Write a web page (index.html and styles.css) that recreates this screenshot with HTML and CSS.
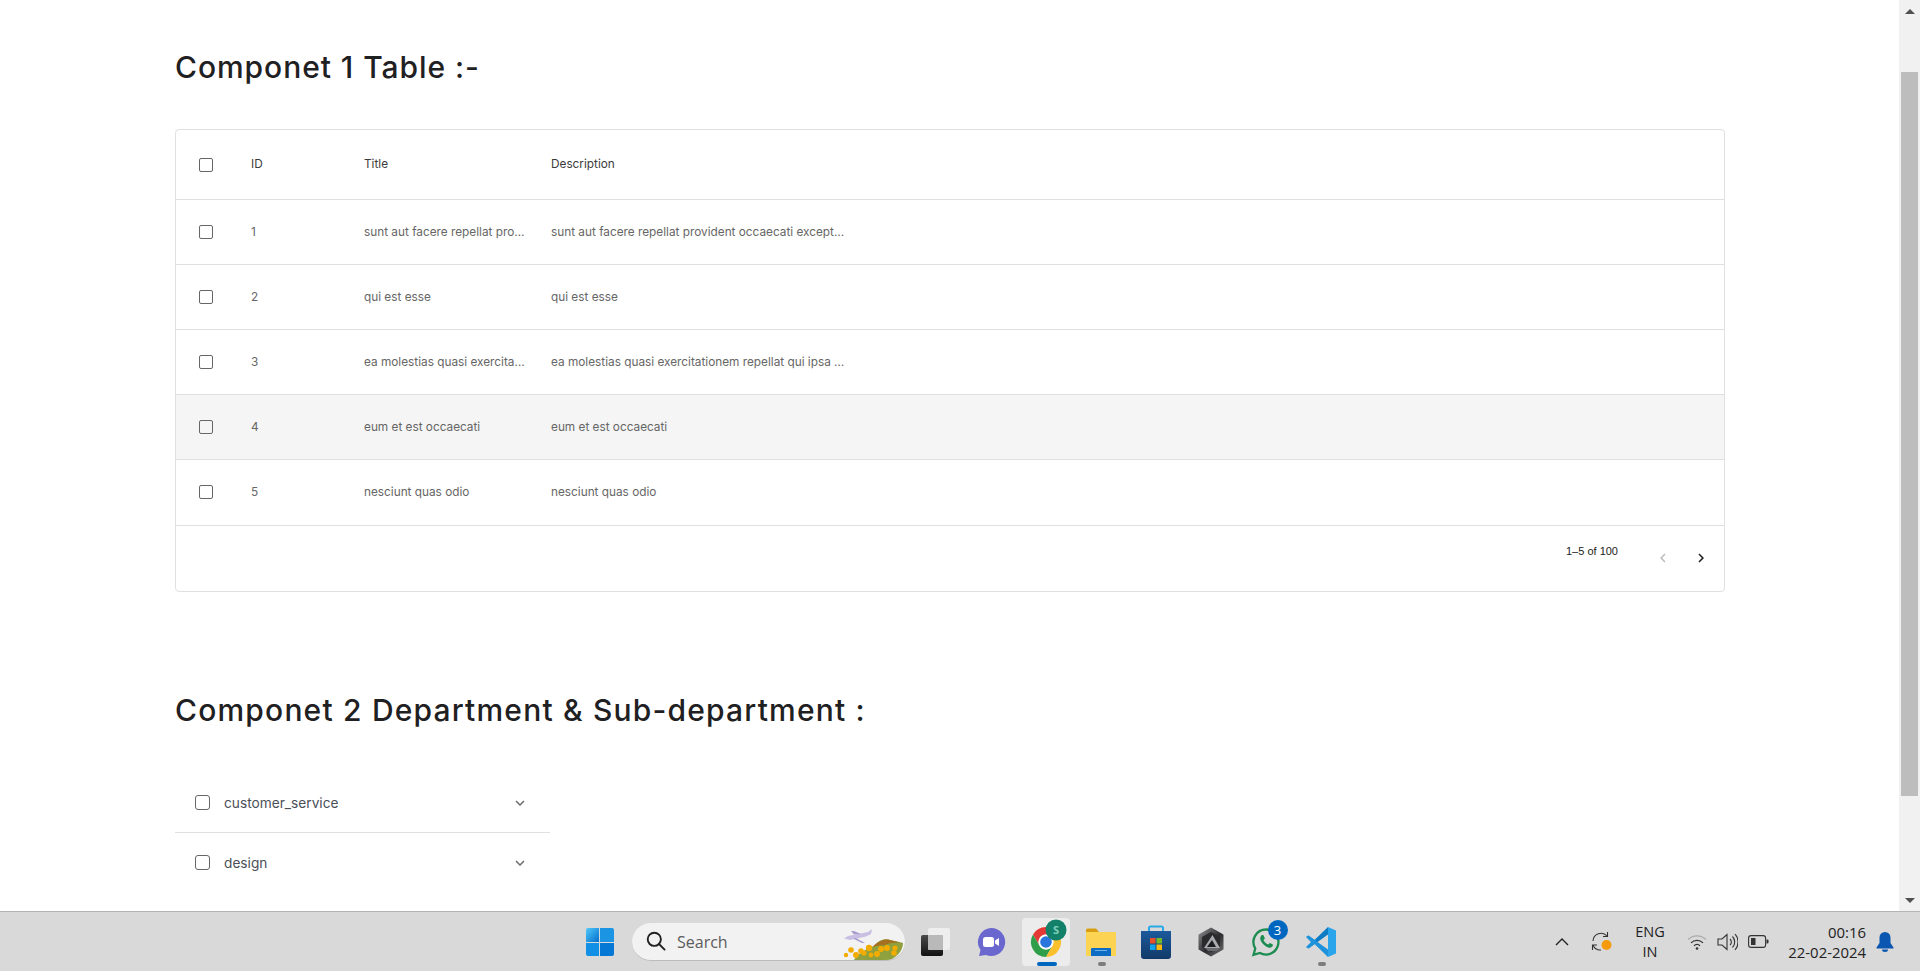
FILE: index.html
```html
<!DOCTYPE html>
<html lang="en">

<head>
    <meta charset="UTF-8">
    <meta name="viewport" content="width=device-width, initial-scale=1.0">
    <title>Components</title>
    <link rel="stylesheet" href="styles.css">
</head>

<body>
    <div class="screen">
        <main class="page">
            <h1 class="heading">Componet 1 Table :-</h1>

            <div class="card">
                <div class="row row-head">
                    <div class="cell-check"><span class="box"></span></div>
                    <div>ID</div>
                    <div>Title</div>
                    <div>Description</div>
                </div>
                <div class="row">
                    <div class="cell-check"><span class="box"></span></div>
                    <div>1</div>
                    <div>sunt aut facere repellat pro…</div>
                    <div>sunt aut facere repellat provident occaecati except…</div>
                </div>
                <div class="row">
                    <div class="cell-check"><span class="box"></span></div>
                    <div>2</div>
                    <div>qui est esse</div>
                    <div>qui est esse</div>
                </div>
                <div class="row">
                    <div class="cell-check"><span class="box"></span></div>
                    <div>3</div>
                    <div>ea molestias quasi exercita…</div>
                    <div>ea molestias quasi exercitationem repellat qui ipsa …</div>
                </div>
                <div class="row row-hover">
                    <div class="cell-check"><span class="box"></span></div>
                    <div>4</div>
                    <div>eum et est occaecati</div>
                    <div>eum et est occaecati</div>
                </div>
                <div class="row row-last">
                    <div class="cell-check"><span class="box"></span></div>
                    <div>5</div>
                    <div>nesciunt quas odio</div>
                    <div>nesciunt quas odio</div>
                </div>
                <div class="pager">
                    <span class="pager-text">1–5 of 100</span>
                    <svg class="pager-btn" viewBox="0 0 24 24" fill="#bdbdbd"><path d="M15.41 7.41 14 6l-6 6 6 6 1.41-1.41L10.83 12z"/></svg>
                    <svg class="pager-btn" viewBox="0 0 24 24" fill="#222"><path d="M10 6 8.59 7.41 13.17 12l-4.58 4.59L10 18l6-6z"/></svg>
                </div>
            </div>

            <h1 class="heading heading-second">Componet 2 Department &amp; Sub-department :</h1>

            <div class="accordion">
                <div class="acc-row acc-line">
                    <span class="box box-acc"></span>
                    <span class="acc-label">customer_service</span>
                    <svg class="acc-arrow" viewBox="0 0 24 24" fill="#6b6b6b"><path d="M16.59 8.59 12 13.17 7.41 8.59 6 10l6 6 6-6z"/></svg>
                </div>
                <div class="acc-row">
                    <span class="box box-acc"></span>
                    <span class="acc-label">design</span>
                    <svg class="acc-arrow" viewBox="0 0 24 24" fill="#6b6b6b"><path d="M16.59 8.59 12 13.17 7.41 8.59 6 10l6 6 6-6z"/></svg>
                </div>
            </div>
        </main>

        <div class="scrollbar">
            <span class="sb-up"></span>
            <span class="sb-thumb"></span>
            <span class="sb-down"></span>
        </div>
    </div>

    <footer class="taskbar">
        <div class="strip">
            <div class="tb-item">
                <svg width="30" height="30" viewBox="0 0 30 30">
                    <defs>
                        <linearGradient id="win" x1="0" y1="0" x2="1" y2="1">
                            <stop offset="0" stop-color="#52c8f8"/>
                            <stop offset="1" stop-color="#0170cf"/>
                        </linearGradient>
                    </defs>
                    <path d="M1 3a2 2 0 0 1 2-2h11v14H1z" fill="url(#win)"/>
                    <path d="M15 1h12a2 2 0 0 1 2 2v12H15z" fill="#1c94e4"/>
                    <path d="M1 16h13v13H3a2 2 0 0 1-2-2z" fill="#1190e6"/>
                    <path d="M15 16h14v11a2 2 0 0 1-2 2H15z" fill="#0478d4"/>
                </svg>
            </div>

            <div class="search">
                <svg width="20" height="20" viewBox="0 0 20 20" fill="none" stroke="#222" stroke-width="1.9">
                    <circle cx="8.3" cy="8.3" r="6.6"/>
                    <path d="m13 13 5.6 5.6" stroke-linecap="round"/>
                </svg>
                <span class="search-text">Search</span>
                <svg class="search-art" width="65" height="38" viewBox="0 0 65 38">
                    <path d="M4 16.500 8 14l20-4 4-3-1 5-5 2.500-16 3.500z" fill="#c9bfe2"/>
                    <path d="M14 12.500 11 9h3l7 3zM16 16l9 5h-3l-9-4.500z" fill="#a99dd0"/>
                    <path d="M14 38c4-6 10-10 20-14 4-5 10-8 16-6 4 1 9 2 13 3 0 7-5 13-13 17z" fill="#8fa03e"/>
                    <path d="M32 25c5-4 11-9 18-7 4 1 9 2 13 3-8-1-14 0-18 2-5 0-9 1-13 2z" fill="#a5701f"/>
                    <g fill="#f2ac00">
                        <circle cx="6" cy="33" r="2.200"/>
                        <circle cx="11" cy="28" r="2.800"/>
                        <circle cx="16" cy="33" r="3"/>
                        <circle cx="21" cy="29" r="2.800"/>
                        <circle cx="24" cy="31" r="2.600"/>
                        <circle cx="29" cy="26" r="3.200"/>
                        <circle cx="31" cy="33" r="2.400"/>
                        <circle cx="37" cy="32" r="3"/>
                        <circle cx="41" cy="27" r="3"/>
                        <circle cx="47" cy="26" r="3"/>
                        <circle cx="54" cy="31" r="2.800"/>
                        <circle cx="55" cy="26" r="2.600"/>
                    </g>
                </svg>
            </div>

            <div class="tb-item">
                <svg width="32" height="30" viewBox="0 0 32 30">
                    <defs>
                        <linearGradient id="tv" x1="0" y1="0" x2="0" y2="1">
                            <stop offset="0" stop-color="#4a4a4a"/>
                            <stop offset="1" stop-color="#111"/>
                        </linearGradient>
                    </defs>
                    <rect x="1" y="8" width="22" height="21" rx="2" fill="url(#tv)"/>
                    <rect x="8" y="1" width="22" height="22" rx="2" fill="#f3f3f3" fill-opacity=".8"/>
                    <rect x="8" y="8" width="15" height="15" rx="1" fill="#b9b9b9"/>
                </svg>
            </div>

            <div class="tb-item">
                <svg width="30" height="30" viewBox="0 0 30 30">
                    <path d="M15 1a14 14 0 1 1-5 27l-7 1 1.500-6A14 14 0 0 1 15 1z" fill="#6a67cf"/>
                    <rect x="7" y="10" width="11" height="10" rx="2.500" fill="#fff"/>
                    <path d="M19 13.500l4-2.500v8l-4-2.500z" fill="#fff"/>
                </svg>
            </div>

            <div class="tb-item tb-active">
                <svg width="48" height="48" viewBox="0 0 48 48">
                    <path d="M37 16.500A15 15 0 0 0 11 16.500L17.500 27.750A7.500 7.500 0 0 1 24 16.500z" fill="#e53935"/>
                    <path d="M11 16.500A15 15 0 0 0 24 39L30.500 27.750A7.500 7.500 0 0 1 17.500 27.750z" fill="#2e9e48"/>
                    <path d="M24 39A15 15 0 0 0 37 16.500H24A7.500 7.500 0 0 1 30.500 27.750z" fill="#fbc02d"/>
                    <circle cx="24" cy="24" r="7.500" fill="#fff"/>
                    <circle cx="24" cy="24" r="5.800" fill="#2a76dd"/>
                    <circle cx="34" cy="12" r="10.500" fill="#13806a"/>
                    <text x="34" y="16" class="badge-s">S</text>
                </svg>
                <span class="tb-bar"></span>
            </div>

            <div class="tb-item tb-open">
                <svg width="30" height="30" viewBox="0 0 30 30">
                    <path d="M0 3a1.500 1.500 0 0 1 1.500-1.500H10l3 3.500h-13z" fill="#d89e12"/>
                    <path d="M0 5h29a1 1 0 0 1 1 1v22a1 1 0 0 1-1 1H1a1 1 0 0 1-1-1z" fill="#fcd353"/>
                    <path d="M5 22a1 1 0 0 1 1-1h18a1 1 0 0 1 1 1v7H5z" fill="#0f6cc4"/>
                    <rect x="9" y="23" width="12" height="1" fill="#6db4ee"/>
                </svg>
                <span class="tb-dot"></span>
            </div>

            <div class="tb-item">
                <svg width="30" height="34" viewBox="0 0 30 34">
                    <defs>
                        <linearGradient id="store" x1="0" y1="0" x2="0" y2="1">
                            <stop offset="0" stop-color="#1c5a9c"/>
                            <stop offset="1" stop-color="#123a68"/>
                        </linearGradient>
                    </defs>
                    <path d="M8 7V3a1.500 1.500 0 0 1 1.500-1.500h11A1.500 1.500 0 0 1 22 3v4" fill="none" stroke="#2aa9e8" stroke-width="2"/>
                    <path d="M0 6h30v25a3 3 0 0 1-3 3H3a3 3 0 0 1-3-3z" fill="url(#store)"/>
                    <rect x="9" y="13" width="5.500" height="5.500" fill="#e8502c"/>
                    <rect x="15.500" y="13" width="5.500" height="5.500" fill="#74b92a"/>
                    <rect x="9" y="19.500" width="5.500" height="5.500" fill="#12a3ea"/>
                    <rect x="15.500" y="19.500" width="5.500" height="5.500" fill="#fcb90f"/>
                </svg>
            </div>

            <div class="tb-item">
                <svg width="28" height="30" viewBox="0 0 28 30">
                    <defs>
                        <linearGradient id="hexa" x1="0" y1="0" x2="1" y2="1">
                            <stop offset="0" stop-color="#8c8d90"/>
                            <stop offset=".55" stop-color="#2c2c2e"/>
                            <stop offset="1" stop-color="#6e6e70"/>
                        </linearGradient>
                    </defs>
                    <path d="M14 1.500 25.500 8v14L14 28.500 2.500 22V8z" fill="url(#hexa)" stroke="url(#hexa)" stroke-width="2" stroke-linejoin="round"/>
                    <path d="M14 5 23 10v10l-9 5-9-5V10z" fill="#2a2a2c"/>
                    <path d="M15.500 8 23 21H7z" fill="#a9aaad"/>
                    <path d="M15 13 19 20H10z" fill="#1d1d1f"/>
                    <path d="M8 21h15l-3 3H11z" fill="#6a6b6e"/>
                </svg>
            </div>

            <div class="tb-item tb-wa">
                <svg width="30" height="30" viewBox="0 0 30 30">
                    <path d="M15 2.500a12.500 12.500 0 1 1-6 23.500l-6.500 1.800 1.800-6.300A12.500 12.500 0 0 1 15 2.500z" fill="none" stroke="#1c8c50" stroke-width="2.300"/>
                    <path d="M10.600 8.400c-1.300 1-1.800 2.700-1 4.800 1.300 3.200 4 6 7.500 7.200 2 .7 3.500 0 4.400-1.200.5-.7.500-1.600.3-1.800l-3-1.500-1.600 1.600c-2-.8-3.800-2.600-4.700-4.600l1.400-1.500-1.300-3c-.4-.4-1.700-.5-2.500 0z" fill="#1c8c50"/>
                </svg>
                <span class="tb-count">3</span>
            </div>

            <div class="tb-item tb-open">
                <svg width="32" height="30" viewBox="0 0 32 30">
                    <path d="M1 20l2.500 1.500L23 7.500V0L9.500 13 3.500 8.500 1 10z" fill="#0d7cc4"/>
                    <path d="M3.500 8.500 1 10v10l2.500 1.500L9 15z" fill="#d9d9d9"/>
                    <path d="M1 10l2.500-1.500L23 22.500V30L9.500 17 3.500 21.500 1 20l5-5z" fill="#1e93dc"/>
                    <path d="M23 0l8 3.500v23L23 30z" fill="#2aa5ec"/>
                </svg>
                <span class="tb-dot"></span>
            </div>
        </div>

        <div class="tray">
            <svg class="tray-chevron" width="14" height="8" viewBox="0 0 14 8" fill="none" stroke="#222" stroke-width="1.400"><path d="M1 7l6-6 6 6"/></svg>
            <svg class="tray-sync" width="22" height="22" viewBox="0 0 22 22" fill="none" stroke="#333" stroke-width="1.100">
                <path d="M2 10a8 8 0 0 1 14-5"/>
                <path d="M16.500 1v4.500H12"/>
                <path d="M2 14a8 8 0 0 0 8 5"/>
                <path d="M1.500 19v-5H6"/>
                <circle cx="15.500" cy="14" r="5" fill="#f59a0b" stroke="none"/>
            </svg>
            <div class="tray-lang">ENG<br>IN</div>
            <svg class="tray-wifi" width="20" height="16" viewBox="0 0 20 16" fill="none" stroke="#333" stroke-width="1.200">
                <path d="M1 5.500a13 13 0 0 1 18 0" stroke="#aaa"/>
                <path d="M4 8.800a8.500 8.500 0 0 1 12 0"/>
                <path d="M7 11.800a4 4 0 0 1 6 0"/>
                <circle cx="10" cy="14.500" r="1.300" fill="#333" stroke="none"/>
            </svg>
            <svg class="tray-vol" width="21" height="18" viewBox="0 0 21 18" fill="none" stroke="#333" stroke-width="1.100">
                <path d="M1 6h4l5-4.500v15L5 12H1z"/>
                <path d="M13 6a4 4 0 0 1 0 6"/>
                <path d="M15.500 3.500a8 8 0 0 1 0 11"/>
                <path d="M18 1a12 12 0 0 1 0 16"/>
            </svg>
            <svg class="tray-batt" width="21" height="13" viewBox="0 0 21 13" fill="none" stroke="#333" stroke-width="1.100">
                <rect x=".6" y=".6" width="17" height="11.800" rx="2.500"/>
                <rect x="3" y="3" width="4.500" height="7" fill="#333" stroke="none"/>
                <path d="M18.500 4.500h1a1 1 0 0 1 1 1v2a1 1 0 0 1-1 1h-1z" fill="#333" stroke="none"/>
            </svg>
            <div class="tray-clock">00:16<br>22-02-2024</div>
            <svg class="tray-bell" width="18" height="20" viewBox="0 0 18 20" fill="#0a56b0">
                <path d="M9 0a5.500 5.500 0 0 1 5.500 5.500V11l3 4.500v1H.5v-1l3-4.500V5.500A5.500 5.500 0 0 1 9 0z"/>
                <path d="M6 17.500h6a3 2.500 0 0 1-6 0z"/>
            </svg>
        </div>
    </footer>
</body>

</html>
```

FILE: styles.css
```css
* {
    box-sizing: border-box;
}

body {
    margin: 0;
    height: 971px;
    overflow: hidden;
    font-family: Inter, sans-serif;
    background-color: #fff;
    display: flex;
    flex-direction: column;
}

.screen {
    display: flex;
    height: 911px;
}

.page {
    flex: 1;
    padding: 45px 174px 0 175px;
    overflow: hidden;
}

.heading {
    margin: 0;
    font-size: 30px;
    line-height: 44px;
    font-weight: 500;
    letter-spacing: 0.95px;
    color: #1f2022;
}

.heading-second {
    margin-top: 96px;
    letter-spacing: 1.19px;
}

/* table */
.card {
    margin-top: 40px;
    border: 1px solid #e0e0e0;
    border-radius: 4px;
    height: 463px;
}

.row {
    display: grid;
    grid-template-columns: 75px 113px 187px 1fr;
    align-items: center;
    height: 65px;
    border-bottom: 1px solid #e0e0e0;
    font-size: 11.8px;
    color: #666;
    white-space: nowrap;
}

.row > div {
    padding-bottom: 1px;
}

.row > .cell-check {
    padding-bottom: 0;
}

.row-head {
    height: 70px;
    color: #3b3b3b;
}

.row-hover {
    background-color: #f5f5f5;
}

.row-last {
    height: 66px;
    padding-bottom: 1px;
}

.cell-check {
    padding-left: 23px;
    display: flex;
}

.box {
    display: block;
    width: 14px;
    height: 14px;
    border: 1.5px solid #666;
    border-radius: 2px;
}

.pager {
    display: flex;
    height: 65px;
    justify-content: flex-end;
    font-family: "Liberation Sans", sans-serif;
    font-size: 11px;
    color: #222;
}

.pager-text {
    margin: 19px 36px 0 0;
}

.pager-btn {
    width: 18px;
    height: 18px;
    margin: 23px 0 0 0;
}

.pager-btn:last-child {
    margin: 23px 14px 0 20px;
}

/* accordion */
.accordion {
    margin-top: 42px;
    width: 375px;
}

.acc-row {
    display: flex;
    align-items: center;
    height: 59px;
    padding: 0 20px;
}

.acc-line {
    padding-bottom: 1px;
    border-bottom: 1px solid #e0e0e0;
}

.box-acc {
    width: 15px;
    height: 15px;
    border-radius: 3px;
}

.acc-label {
    margin-left: 14px;
    font-size: 13.7px;
    color: #4a4f57;
}

.acc-arrow {
    width: 18px;
    height: 18px;
    margin-left: auto;
    margin-right: 1px;
}

/* scrollbar */
.scrollbar {
    width: 21px;
    background-color: #f1f1f1;
    display: flex;
    flex-direction: column;
    align-items: center;
}

.sb-up {
    margin-top: 9px;
    border-left: 5px solid transparent;
    border-right: 5px solid transparent;
    border-bottom: 5px solid #505050;
}

.sb-thumb {
    width: 17px;
    height: 724px;
    margin-top: 58px;
    background-color: #bdbdbd;
}

.sb-down {
    margin-top: 102px;
    border-left: 5px solid transparent;
    border-right: 5px solid transparent;
    border-top: 5px solid #505050;
}

/* taskbar */
.taskbar {
    height: 60px;
    background-color: #d9d9d9;
    border-top: 1px solid #b4b4b4;
    display: flex;
    font-family: "Open Sans", sans-serif;
    color: #222;
}

.strip {
    display: flex;
    align-items: center;
    padding-left: 572px;
}

.tb-item {
    position: relative;
    width: 55px;
    height: 59px;
    display: flex;
    align-items: center;
    justify-content: center;
}

.tb-active svg {
    border-radius: 4px;
    background-color: #ececec;
}

.tb-bar {
    position: absolute;
    left: 18px;
    bottom: 5px;
    width: 20px;
    height: 4px;
    border-radius: 2px;
    background-color: #0067c0;
}

.tb-open .tb-dot {
    position: absolute;
    left: 24px;
    bottom: 5px;
    width: 8px;
    height: 4px;
    border-radius: 2px;
    background-color: #7d7d7d;
}

.tb-count {
    position: absolute;
    left: 29px;
    top: 8px;
    width: 20px;
    height: 20px;
    border-radius: 50%;
    background-color: #0067c0;
    color: #fff;
    font-size: 13px;
    line-height: 20px;
    text-align: center;
}

.badge-s {
    font-family: "Open Sans", sans-serif;
    font-size: 11px;
    font-weight: 700;
    fill: #7fd0bd;
    text-anchor: middle;
}

.search {
    width: 273px;
    height: 38px;
    margin: 0 3.5px 0 5px;
    padding-left: 14px;
    border-radius: 19px;
    background-color: #f2f2f2;
    border-bottom: 1px solid #bcbcbc;
    display: flex;
    align-items: center;
    overflow: hidden;
}

.search-text {
    margin-left: 11px;
    margin-top: 2px;
    font-size: 16px;
    color: #5c5c5c;
}

.search-art {
    margin-left: auto;
}

.tray {
    margin-left: auto;
    display: flex;
    align-items: center;
    padding-right: 26px;
    font-size: 14.9px;
    line-height: 20px;
}

.tray-lang {
    width: 40px;
    margin-left: 17px;
    text-align: center;
    font-size: 14.5px;
}

.tray-wifi {
    margin-left: 17px;
}

.tray-vol {
    margin-left: 10px;
}

.tray-batt {
    margin-left: 10px;
}

.tray-sync {
    margin-left: 22px;
}

.tray-clock {
    width: 90px;
    margin-left: 7px;
    text-align: right;
}

.tray-bell {
    margin-left: 10px;
}
```
